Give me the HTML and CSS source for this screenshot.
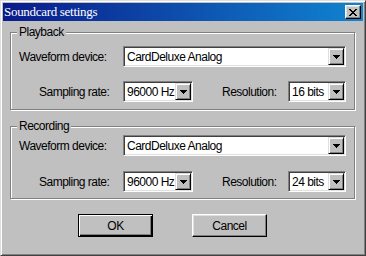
FILE: index.html
```html
<!DOCTYPE html>
<html lang="en">
<head>
    <meta charset="UTF-8">
    <title>Soundcard settings</title>
    <link rel="stylesheet" href="styles.css">
</head>
<body>
    <div class="window">
        <div class="titlebar">
            <span class="title">Soundcard settings</span>
            <button class="close-button">
                <svg class="close-icon" viewBox="0 0 8 7" shape-rendering="crispEdges">
                    <path d="M0 0h2v1h-2z M6 0h2v1h-2z M1 1h2v1h-2z M5 1h2v1h-2z M2 2h4v1h-4z M3 3h2v1h-2z M2 4h4v1h-4z M1 5h2v1h-2z M5 5h2v1h-2z M0 6h2v1h-2z M6 6h2v1h-2z" fill="#000"></path>
                </svg>
            </button>
        </div>

        <div class="content">
            <!-- Playback -->
            <div class="group group-playback">
                <span class="group-label">Playback</span>
                <div class="row">
                    <span class="label">Waveform device:</span>
                    <div class="combo combo-device">
                        <span class="combo-text">CardDeluxe Analog</span>
                        <span class="combo-button"><svg class="arrow" viewBox="0 0 7 4" shape-rendering="crispEdges"><path d="M0 0h7v1h-7z M1 1h5v1h-5z M2 2h3v1h-3z M3 3h1v1h-1z" fill="#000"></path></svg></span>
                    </div>
                </div>
                <div class="row row-second">
                    <span class="label label-indent">Sampling rate:</span>
                    <div class="combo combo-rate">
                        <span class="combo-text">96000 Hz</span>
                        <span class="combo-button"><svg class="arrow" viewBox="0 0 7 4" shape-rendering="crispEdges"><path d="M0 0h7v1h-7z M1 1h5v1h-5z M2 2h3v1h-3z M3 3h1v1h-1z" fill="#000"></path></svg></span>
                    </div>
                    <span class="label label-res">Resolution:</span>
                    <div class="combo combo-res">
                        <span class="combo-text">16 bits</span>
                        <span class="combo-button"><svg class="arrow" viewBox="0 0 7 4" shape-rendering="crispEdges"><path d="M0 0h7v1h-7z M1 1h5v1h-5z M2 2h3v1h-3z M3 3h1v1h-1z" fill="#000"></path></svg></span>
                    </div>
                </div>
            </div>

            <!-- Recording -->
            <div class="group group-recording">
                <span class="group-label">Recording</span>
                <div class="row">
                    <span class="label">Waveform device:</span>
                    <div class="combo combo-device">
                        <span class="combo-text">CardDeluxe Analog</span>
                        <span class="combo-button"><svg class="arrow" viewBox="0 0 7 4" shape-rendering="crispEdges"><path d="M0 0h7v1h-7z M1 1h5v1h-5z M2 2h3v1h-3z M3 3h1v1h-1z" fill="#000"></path></svg></span>
                    </div>
                </div>
                <div class="row row-second">
                    <span class="label label-indent">Sampling rate:</span>
                    <div class="combo combo-rate">
                        <span class="combo-text">96000 Hz</span>
                        <span class="combo-button"><svg class="arrow" viewBox="0 0 7 4" shape-rendering="crispEdges"><path d="M0 0h7v1h-7z M1 1h5v1h-5z M2 2h3v1h-3z M3 3h1v1h-1z" fill="#000"></path></svg></span>
                    </div>
                    <span class="label label-res">Resolution:</span>
                    <div class="combo combo-res">
                        <span class="combo-text">24 bits</span>
                        <span class="combo-button"><svg class="arrow" viewBox="0 0 7 4" shape-rendering="crispEdges"><path d="M0 0h7v1h-7z M1 1h5v1h-5z M2 2h3v1h-3z M3 3h1v1h-1z" fill="#000"></path></svg></span>
                    </div>
                </div>
            </div>

            <div class="buttons">
                <button class="button button-default">OK</button>
                <button class="button">Cancel</button>
            </div>
        </div>
    </div>
</body>
</html>
```

FILE: styles.css
```css
body {
    margin: 0;
    font-family: "Liberation Sans", Arial, sans-serif;
    font-size: 12px;
    letter-spacing: -0.5px;
    color: #000;
}

.window {
    box-sizing: border-box;
    width: 366px;
    height: 256px;
    padding: 2px;
    background: #c0c0c0;
    border: 1px solid;
    border-color: #dfdfdf #404040 #404040 #dfdfdf;
    box-shadow: inset 1px 1px #fff, inset -1px -1px #808080;
}

.titlebar {
    height: 18px;
    display: flex;
    align-items: center;
    justify-content: space-between;
    padding: 0 2px 0 1px;
    background: linear-gradient(to right, #0a1a8a, #1084d0);
}

.title {
    font-family: "Liberation Serif", "Times New Roman", serif;
    font-size: 13px;
    letter-spacing: -0.3px;
    color: #fff;
}

.close-button {
    box-sizing: border-box;
    width: 16px;
    height: 14px;
    padding: 0;
    display: flex;
    align-items: center;
    justify-content: center;
    background: #c0c0c0;
    border: 1px solid;
    border-color: #fff #000 #000 #fff;
    box-shadow: inset -1px -1px #808080, inset 1px 1px #dfdfdf;
}

.close-icon {
    width: 8px;
    height: 7px;
}

.content {
    padding: 0 8px 0 7px;
}

/* etched group box */
.group {
    position: relative;
    border: 1px solid #808080;
    box-shadow: inset 1px 1px #fff, 1px 1px #fff;
    padding: 0 8px 0 8px;
}

.group-playback {
    margin-top: 11px;
    padding-top: 13px;
    padding-bottom: 7px;
}

.group-recording {
    margin-top: 16px;
    padding-top: 8px;
    padding-bottom: 6px;
}

.group-label {
    position: absolute;
    top: -8px;
    left: 6px;
    padding: 0 2px;
    line-height: 14px;
    background: #c0c0c0;
}

.row {
    display: flex;
    align-items: center;
    height: 21px;
}

.group-playback .row-second {
    margin-top: 14px;
}

.group-recording .row-second {
    margin-top: 15px;
}

.label {
    box-sizing: border-box;
    width: 104px;
    flex-shrink: 0;
}

.label-indent {
    padding-left: 20px;
}

.label-res {
    width: 66px;
    margin-left: 29px;
}

/* sunken combo box */
.combo {
    box-sizing: border-box;
    height: 21px;
    display: flex;
    align-items: center;
    padding: 1px;
    background: #fff;
    border: 1px solid;
    border-color: #808080 #fff #fff #808080;
    box-shadow: inset 1px 1px #404040, inset -1px -1px #dfdfdf;
}

.combo-device { width: 223px; }
.combo-rate { width: 70px; }
.combo-res { width: 58px; }

.combo-text {
    flex: 1;
    padding-left: 2px;
    white-space: nowrap;
    overflow: hidden;
}

.combo-button {
    box-sizing: border-box;
    width: 16px;
    height: 17px;
    flex-shrink: 0;
    display: flex;
    align-items: center;
    justify-content: center;
    background: #c0c0c0;
    border: 1px solid;
    border-color: #dfdfdf #000 #000 #dfdfdf;
    box-shadow: inset 1px 1px #fff, inset -1px -1px #808080;
}

.arrow {
    width: 7px;
    height: 4px;
}

.buttons {
    display: flex;
    gap: 39px;
    margin-top: 15px;
    padding-left: 68px;
}

.button {
    box-sizing: border-box;
    width: 75px;
    height: 23px;
    padding: 0;
    font-family: inherit;
    font-size: 12px;
    letter-spacing: inherit;
    color: #000;
    background: #c0c0c0;
    border: 1px solid;
    border-color: #fff #000 #000 #fff;
    box-shadow: inset -1px -1px #808080, inset 1px 1px #dfdfdf;
}

.button-default {
    border-color: #000;
    box-shadow: inset 1px 1px #fff, inset -1px -1px #000, inset -2px -2px #808080;
}
```
